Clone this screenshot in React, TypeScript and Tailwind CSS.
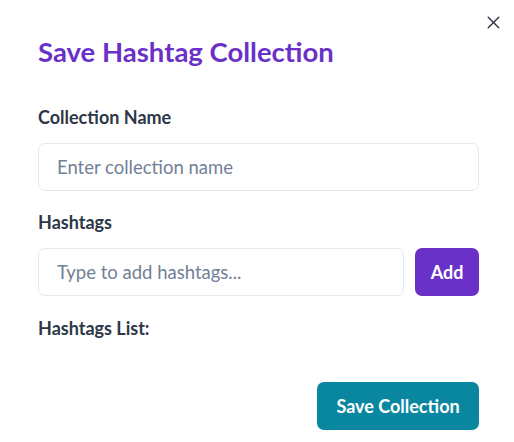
import { X } from "lucide-react";

export default function App() {
  return (
    <div className="relative h-[442px] w-[514px] bg-white font-['Lato',sans-serif] text-[#2d3748]">
      <button
        type="button"
        aria-label="Close"
        className="absolute right-[10px] top-[11px] flex h-[22px] w-[22px] items-center justify-center text-[#2d3748]"
      >
        <X size={21} strokeWidth={1.6} />
      </button>

      <div className="pl-[38px] pr-[35px] pt-[36px]">
        <h1 className="text-[27.5px] font-bold leading-[32px] text-[#6a31c8]">
          Save Hashtag Collection
        </h1>

        <label className="mt-[37px] block text-[18px] font-bold leading-[24px]">
          Collection Name
        </label>
        <input
          type="text"
          placeholder="Enter collection name"
          className="mt-[14px] block h-[48px] w-full rounded-[7px] border border-[#e2e8f0] px-[18px] text-[18.5px] text-[#2d3748] outline-none placeholder:text-[#718096]"
        />

        <label className="mt-[19px] block text-[18px] font-bold leading-[24px]">
          Hashtags
        </label>
        <div className="mt-[14px] flex gap-[11px]">
          <input
            type="text"
            placeholder="Type to add hashtags..."
            className="block h-[48px] min-w-0 flex-1 rounded-[7px] border border-[#e2e8f0] px-[18px] text-[18.5px] text-[#2d3748] outline-none placeholder:text-[#718096]"
          />
          <button
            type="button"
            className="h-[48px] w-[64px] rounded-[7px] bg-[#6a31c8] text-[18px] font-bold text-white"
          >
            Add
          </button>
        </div>

        <h2 className="mt-[20px] text-[18px] font-bold leading-[24px]">
          Hashtags List:
        </h2>

        <div className="mt-[42px] flex justify-end">
          <button
            type="button"
            className="h-[48px] w-[162px] rounded-[7px] bg-[#0987a0] text-[18px] font-bold text-white"
          >
            Save Collection
          </button>
        </div>
      </div>
    </div>
  );
}
